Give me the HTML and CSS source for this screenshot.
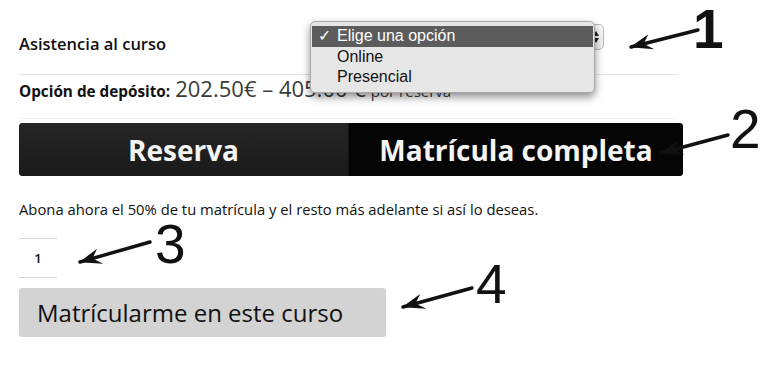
FILE: index.html
```html
<!DOCTYPE html>
<html lang="es">
<head>
<meta charset="utf-8">
<title>Matrícula</title>
<link rel="stylesheet" href="styles.css">
</head>
<body>
<main class="page">
  <div class="field-row">
    <label class="field-label">Asistencia al curso</label>
    <div class="select-box">
      <span class="select-arrows">
        <span class="tri-up"></span>
        <span class="tri-down"></span>
      </span>
    </div>
  </div>

  <div class="deposit-row">
    <strong class="deposit-label">Opción de depósito:</strong>
    <span class="deposit-price">202.50€ – 405.00 €</span>
    <span class="deposit-unit">por reserva</span>
  </div>

  <div class="tabs">
    <div class="tab tab-left">Reserva</div>
    <div class="tab tab-right">Matrícula completa</div>
  </div>

  <p class="desc">Abona ahora el 50% de tu matrícula y el resto más adelante si así lo deseas.</p>

  <div class="qty">1</div>

  <button class="submit" type="button">Matrícularme en este curso</button>
</main>

<ul class="popup">
  <li class="opt opt-selected"><span class="check">✓</span>Elige una opción</li>
  <li class="opt">Online</li>
  <li class="opt">Presencial</li>
</ul>

<svg class="annot" width="768" height="366" viewBox="0 0 768 366" xmlns="http://www.w3.org/2000/svg">
  <defs>
    <marker id="head" viewBox="0 -10 24 20" refX="23" refY="0" markerWidth="24" markerHeight="20" markerUnits="userSpaceOnUse" orient="auto">
      <path d="M24 0 L1 -8 L10 0 L3 8 Z" fill="#111"/>
    </marker>
  </defs>
  <g stroke="#111" stroke-width="3.4" stroke-linecap="round" fill="none">
    <line x1="698" y1="30" x2="631" y2="47" marker-end="url(#head)"/>
    <line x1="728" y1="135" x2="661" y2="153" marker-end="url(#head)"/>
    <line x1="150" y1="242" x2="80" y2="262" marker-end="url(#head)"/>
    <line x1="472" y1="288" x2="403" y2="307" marker-end="url(#head)"/>
  </g>
  <g class="nums">
    <text x="693" y="48" class="num num-bold">1</text>
    <text x="730" y="148" class="num">2</text>
    <text x="155" y="263" class="num">3</text>
    <text x="476" y="303" class="num">4</text>
  </g>
</svg>
</body>
</html>
```

FILE: styles.css
```css
* { box-sizing: border-box; }

html, body {
  margin: 0;
  padding: 0;
  background: #fff;
}

body {
  width: 768px;
  height: 366px;
  position: relative;
  overflow: hidden;
  font-family: "Open Sans", "Liberation Sans", sans-serif;
  color: #111;
}

.page {
  padding: 0 19px;
  width: 702px;
}

.field-row {
  display: flex;
  width: 659px;
  height: 75px;
  border-bottom: 1px solid #e2e2e2;
}

.field-label {
  width: 291px;
  padding-top: 33px;
  font-size: 16.5px;
  font-weight: 600;
  line-height: 22px;
}

.select-box {
  margin-top: 24px;
  width: 294px;
  height: 26px;
  border: 1px solid #b8b8b8;
  border-radius: 5px;
  background: linear-gradient(#fafafa, #ececec);
  display: flex;
  justify-content: flex-end;
  align-items: center;
  padding-right: 4px;
}

.select-arrows {
  display: flex;
  flex-direction: column;
  gap: 2px;
}

.tri-up, .tri-down {
  width: 0;
  height: 0;
  border-left: 3.5px solid transparent;
  border-right: 3.5px solid transparent;
}
.tri-up { border-bottom: 5px solid #222; }
.tri-down { border-top: 5px solid #222; }

.deposit-row {
  display: flex;
  align-items: baseline;
  gap: 5px;
  height: 44px;
  padding-top: 0;
  width: 659px;
  border-bottom: 1px solid #f2f2f2;
}

.deposit-label {
  font-size: 15.3px;
  font-weight: 700;
  color: #111;
}

.deposit-price {
  font-size: 22px;
  color: #3a3a3a;
  line-height: 26px;
}

.deposit-unit {
  font-size: 15px;
  color: #3a3a3a;
}

.tabs {
  margin-top: 4px;
  display: flex;
  width: 664px;
  height: 53px;
  border-radius: 4px;
  overflow: hidden;
  background: #050505;
}

.tab {
  display: flex;
  align-items: center;
  justify-content: center;
  color: #f4f4f4;
  font-size: 28px;
  font-weight: 700;
}

.tab-left {
  width: 330px;
  background: linear-gradient(#262626, #1a1a1a);
  border-right: 1px solid #111;
}

.tab-right {
  flex: 1;
  background: #050505;
}

.desc {
  margin: 23px 0 0;
  font-size: 14.8px;
  line-height: 20px;
  color: #111;
}

.qty {
  margin-top: 19px;
  width: 38px;
  height: 40px;
  border-top: 1px solid #d8d8d8;
  border-bottom: 1px solid #d8d8d8;
  display: flex;
  align-items: center;
  justify-content: center;
  font-size: 13px;
  font-weight: 600;
  color: #111;
}

.submit {
  display: block;
  margin-top: 10px;
  width: 367px;
  height: 49px;
  border: none;
  border-radius: 3px;
  background: #d3d3d3;
  padding: 0 0 0 18px;
  text-align: left;
  font-family: "Open Sans", "Liberation Sans", sans-serif;
  font-size: 24px;
  color: #111;
}

.popup {
  position: absolute;
  left: 310px;
  top: 21px;
  width: 285px;
  height: 72px;
  margin: 0;
  padding: 4px 1px 0;
  list-style: none;
  background: #e6e6e6;
  border: 1px solid #a8a8a8;
  border-radius: 5px;
  box-shadow: 0 4px 9px rgba(0, 0, 0, 0.45);
  font-family: "Liberation Sans", Arial, sans-serif;
  font-size: 16px;
  color: #111;
}

.opt {
  height: 20.5px;
  line-height: 20.5px;
  padding-left: 25px;
  position: relative;
}

.opt-selected {
  background: #5c5c5c;
  color: #fff;
}

.check {
  position: absolute;
  left: 6px;
  top: 0;
  font-size: 16px;
}

.annot {
  position: absolute;
  left: 0;
  top: 0;
  pointer-events: none;
}

.num {
  font-family: "Liberation Sans", Arial, sans-serif;
  font-size: 55px;
  fill: #111;
}

.num-bold {
  font-weight: 700;
}
```
